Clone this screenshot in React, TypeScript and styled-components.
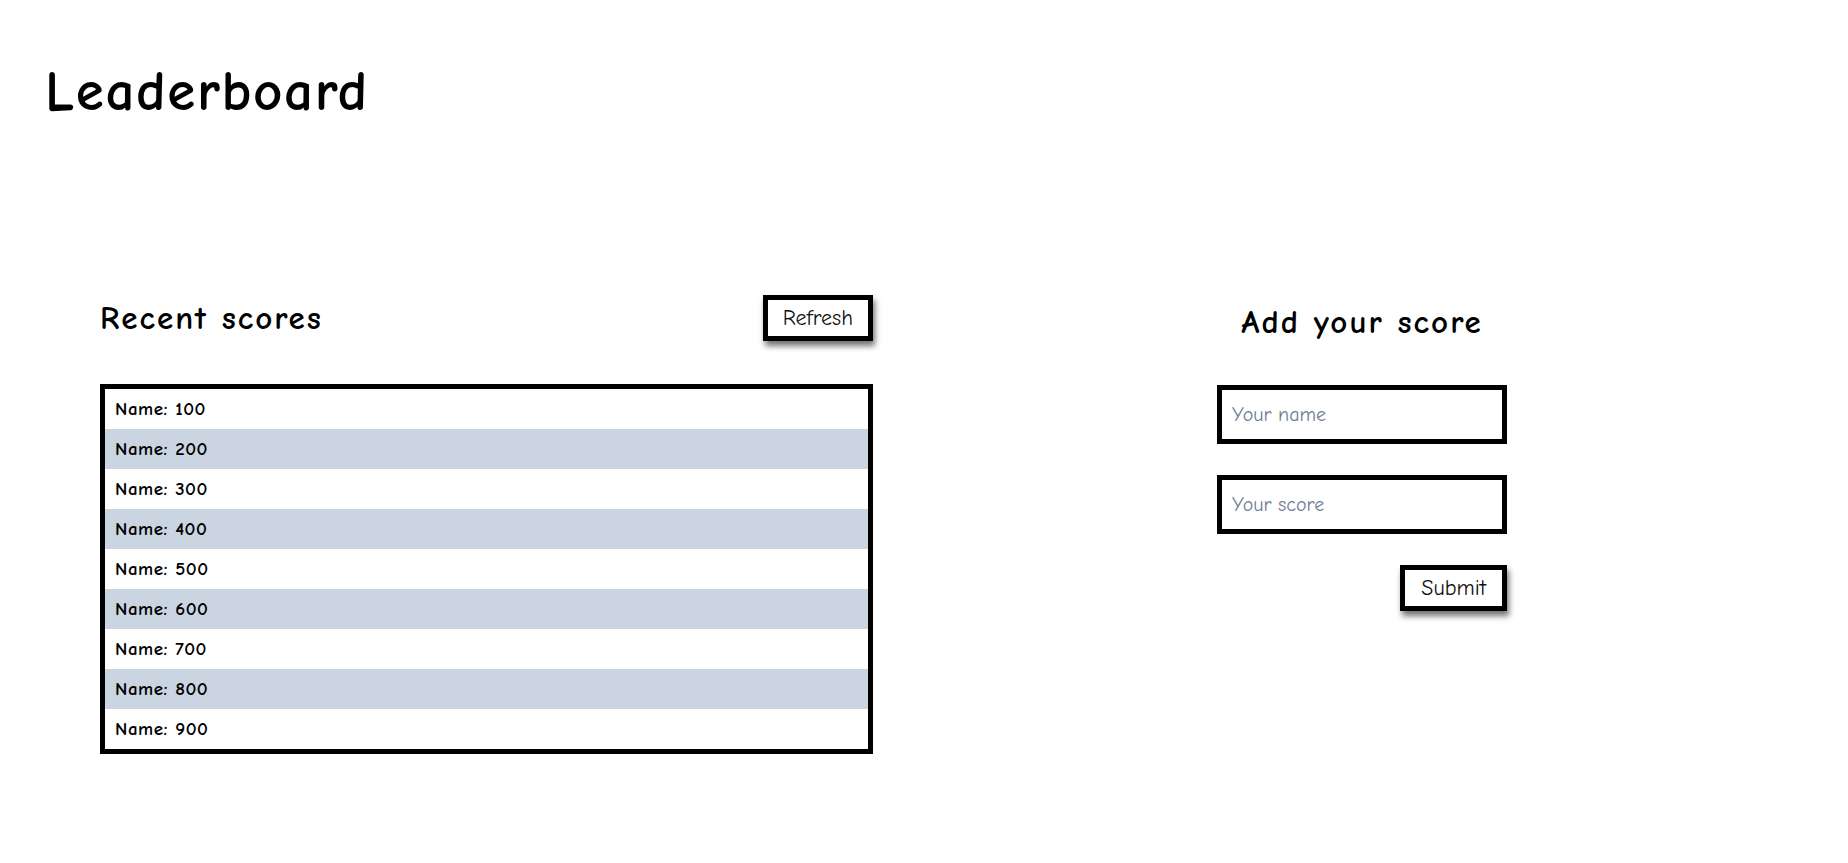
import React from "react";
import styled, { createGlobalStyle } from "styled-components";

const GlobalStyle = createGlobalStyle`
  html, body {
    margin: 0;
    padding: 0;
    background: #ffffff;
    color: #000000;
    font-family: "Comic Sans MS", "Comic Neue", "Chalkboard SE", "DejaVu Sans", sans-serif;
  }
  * { box-sizing: border-box; }
`;

const Page = styled.div`
  padding: 0 48px;
  width: 1848px;
  min-height: 863px;
`;

const Title = styled.h1`
  margin: 0 0 0 -3px;
  padding-top: 56px;
  font-size: 57px;
  line-height: 72px;
  font-weight: 700;
  letter-spacing: 1.6px;
`;

const Grid = styled.main`
  display: grid;
  grid-template-columns: 1fr 1fr;
  margin-top: 167px;
`;

const Column = styled.section`
  padding: 0 51px 0 52px;
`;

const RightColumn = styled.section`
  display: flex;
  justify-content: center;
  padding-top: 9px;
`;

const HeaderRow = styled.div`
  display: flex;
  align-items: center;
  justify-content: space-between;
  height: 46px;
`;

const Heading = styled.h2`
  margin: 0;
  font-size: 33px;
  line-height: 36px;
  font-weight: 700;
  letter-spacing: 2px;
  white-space: nowrap;
`;

const FormHeading = styled(Heading)`
  text-align: center;
  margin-bottom: 45px;
`;

const Button = styled.button`
  font-family: "Comic Neue", "Comic Sans MS", "DejaVu Sans", sans-serif;
  font-size: 22px;
  color: #111;
  background: #fff;
  border: 5px solid #000;
  height: 46px;
  padding: 0 15px;
  box-shadow: 2px 5px 6px rgba(0, 0, 0, 0.55);
  cursor: pointer;
`;

const SubmitButton = styled(Button)`
  align-self: flex-end;
  padding: 0 16px;
`;

const List = styled.ul`
  list-style: none;
  margin: 43px 0 0;
  padding: 0;
  border: 5px solid #000;
`;

const Row = styled.li<{ $alt: boolean }>`
  height: 40px;
  display: flex;
  align-items: center;
  padding: 0 10px;
  font-size: 19px;
  font-weight: 700;
  letter-spacing: 0.5px;
  background: ${(p) => (p.$alt ? "#cbd5e1" : "#ffffff")};
`;

const Form = styled.form`
  width: 290px;
  display: flex;
  flex-direction: column;
`;

const Input = styled.input`
  font-family: "Comic Neue", "Comic Sans MS", "DejaVu Sans", sans-serif;
  font-size: 20px;
  height: 59px;
  border: 5px solid #000;
  padding: 0 10px;
  margin-bottom: 31px;
  outline: none;
  &::placeholder {
    color: #6e7b93;
  }
`;

const scores = [100, 200, 300, 400, 500, 600, 700, 800, 900];

export default function App() {
  return (
    <Page>
      <GlobalStyle />
      <Title>Leaderboard</Title>
      <Grid>
        <Column>
          <HeaderRow>
            <Heading>Recent scores</Heading>
            <Button type="button">Refresh</Button>
          </HeaderRow>
          <List>
            {scores.map((s, i) => (
              <Row key={s} $alt={i % 2 === 1}>
                Name: {s}
              </Row>
            ))}
          </List>
        </Column>
        <RightColumn>
          <Form onSubmit={(e) => e.preventDefault()}>
            <FormHeading>Add your score</FormHeading>
            <Input placeholder="Your name" />
            <Input placeholder="Your score" />
            <SubmitButton type="submit">Submit</SubmitButton>
          </Form>
        </RightColumn>
      </Grid>
    </Page>
  );
}
